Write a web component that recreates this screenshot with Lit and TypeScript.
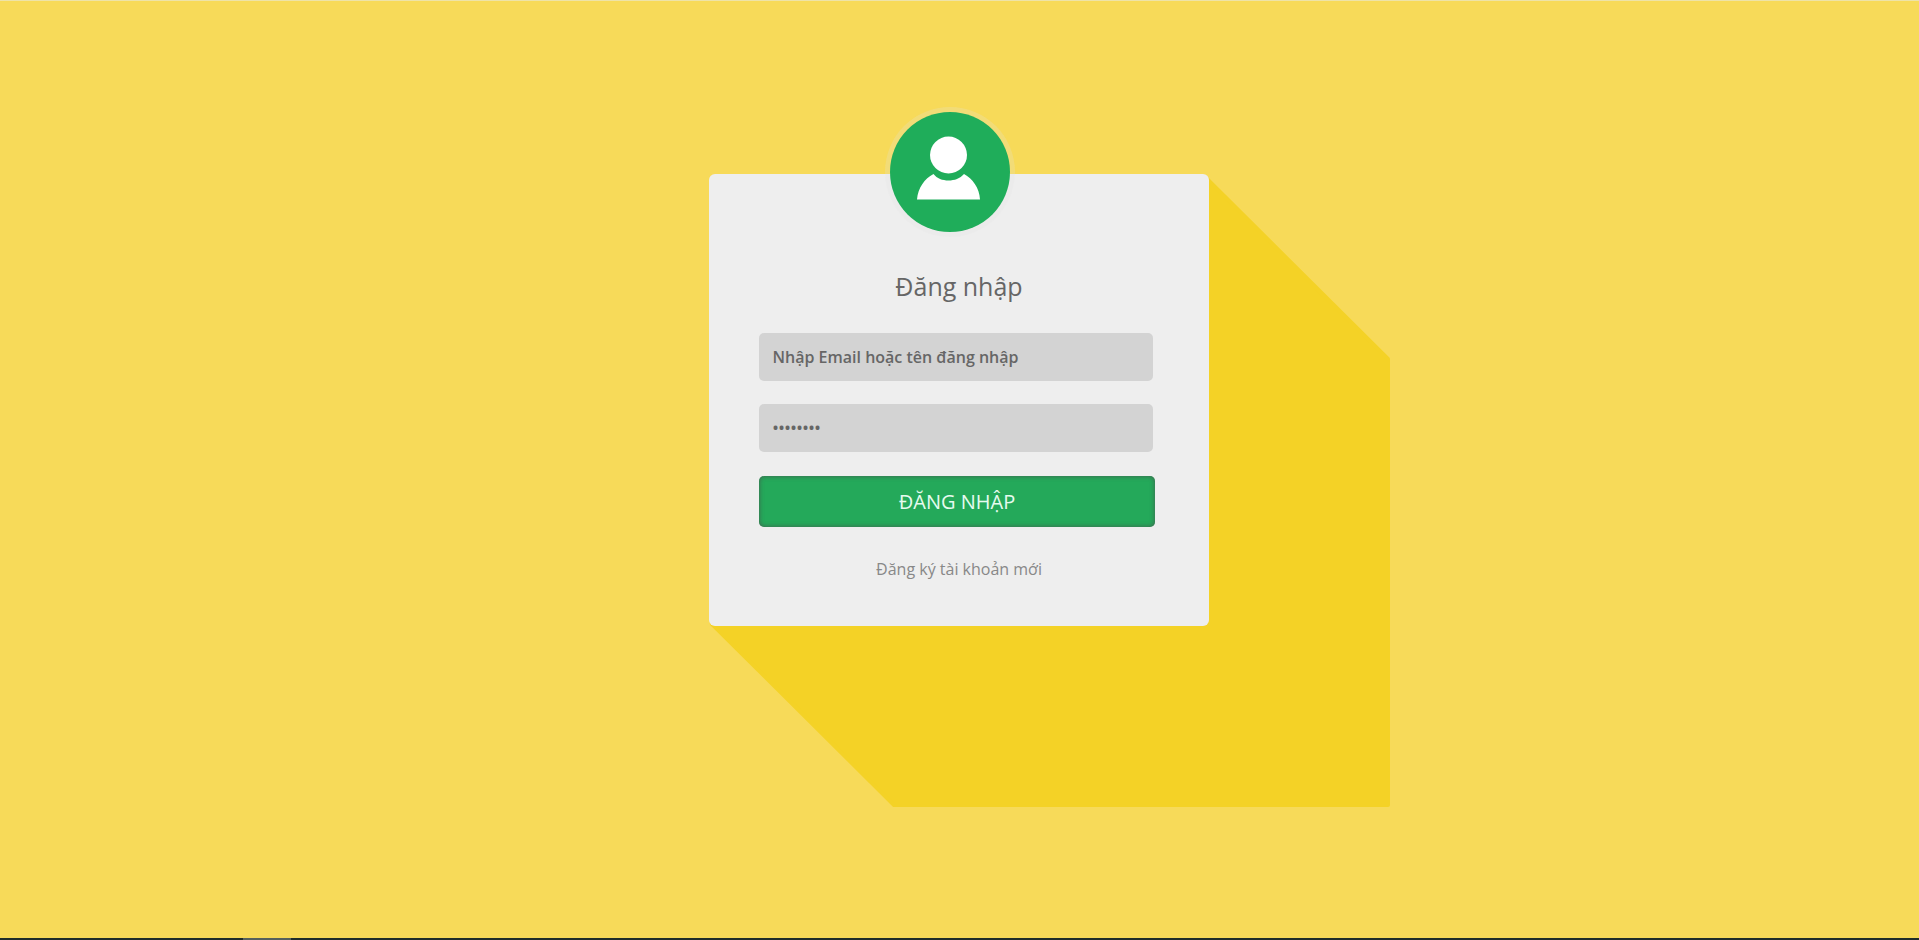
import { LitElement, html, css, svg } from "lit";
import { customElement } from "lit/decorators.js";

@customElement("app-root")
export class AppRoot extends LitElement {
  static styles = css`
    :host {
      display: block;
      height: 940px;
      overflow: hidden;
      font-family: "Open Sans", "Noto Sans", sans-serif;
    }
    .page {
      position: relative;
      height: 940px;
      box-sizing: border-box;
      background: #f7da59;
      display: flex;
      flex-direction: column;
    }
    .topline { height: 1px; background: #eee3a8; flex: none; }
    .main { flex: 1; padding: 173px 0 0 709px; }
    .longshadow { position: absolute; left: 0; top: 0; width: 1919px; height: 940px; }
    .card {
      position: relative;
      width: 500px;
      height: 452px;
      box-sizing: border-box;
      background: #eeeeee;
      border-radius: 6px;
      padding: 94px 50px 0;
    }
    .avatar {
      position: absolute;
      left: 181px;
      top: -62px;
      width: 120px;
      height: 120px;
      border-radius: 50%;
      background: #1fad5a;
      box-shadow: 0 0 0 5px rgba(226, 226, 226, 0.22);
    }
    .avatar svg { display: block; }
    h1 {
      margin: 0 0 29px;
      font-size: 25px;
      line-height: 36px;
      font-weight: 400;
      color: #666;
      text-align: center;
    }
    .field {
      display: block;
      width: 394px;
      height: 48px;
      box-sizing: border-box;
      margin: 0 0 23px;
      padding: 0 13.5px;
      border: 0;
      outline: 0;
      border-radius: 5px;
      background: #d3d3d3;
      color: #666;
      font: 600 16px "Open Sans", sans-serif;
    }
    .btn {
      display: block;
      width: 396px;
      height: 51px;
      margin: 24px 0 0;
      border: 0;
      border-radius: 5px;
      background: #24a95a;
      box-shadow: inset 0 0 5px rgba(75, 75, 75, 0.8);
      color: #e6fbef;
      font: 400 20px "Open Sans", sans-serif;
      text-align: center;
      padding: 0;
    }
    .link {
      display: block;
      margin-top: 30px;
      text-align: center;
      font-size: 16px;
      line-height: 25px;
      color: #888;
      text-decoration: none;
    }
    .bottombar {
      flex: none;
      height: 2px;
      background: #1f2d2a;
      display: flex;
    }
    .bottombar i { display: block; margin-left: 243px; width: 48px; background: #56615c; }
  `;

  render() {
    return html`
      <div class="page">
        <svg class="longshadow" viewBox="0 0 1919 940">
          ${svg`<path d="M1206 178 L1388 359 V805 H894 L712 624 Z" fill="#f4d226" stroke="#f4d226" stroke-width="4" stroke-linejoin="round"/>`}
        </svg>
        <div class="topline"></div>
        <div class="main">
          <form class="card" @submit=${(e: Event) => e.preventDefault()}>
            <div class="avatar">
              <svg width="120" height="120" viewBox="0 0 120 120">
                <circle cx="58.5" cy="43" r="18.5" fill="#fff" />
                <path d="M27 87.5 C28 76 34.5 66.5 43.5 62 C47 66.5 52.5 68.5 58.5 68.5 C64.5 68.5 70 66.5 74 62 C82.5 66.5 89.5 76 90 87.5 Z" fill="#fff" />
              </svg>
            </div>
            <h1>Đăng nhập</h1>
            <input class="field" type="text" value="Nhập Email hoặc tên đăng nhập" />
            <input class="field" type="password" value="12345678" />
            <button class="btn" type="submit">ĐĂNG NHẬP</button>
            <a class="link" href="#">Đăng ký tài khoản mới</a>
          </form>
        </div>
        <div class="bottombar"><i></i></div>
      </div>
    `;
  }
}
